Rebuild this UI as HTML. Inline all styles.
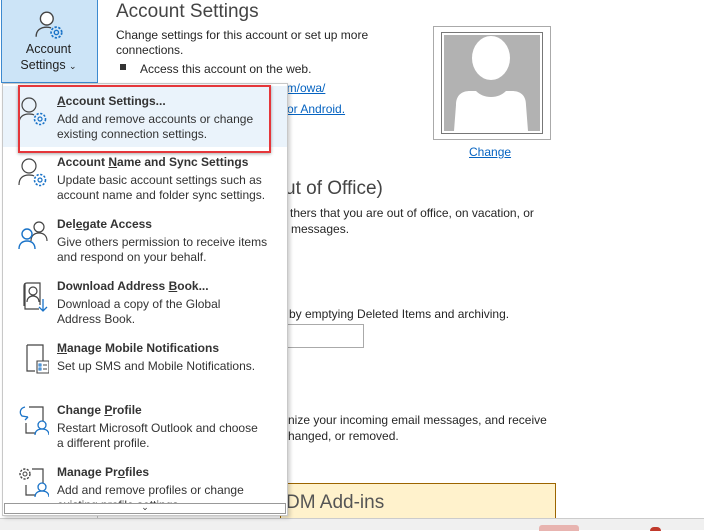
<!DOCTYPE html>
<html><head><meta charset="utf-8"><style>
*{margin:0;padding:0;box-sizing:border-box}
body{width:704px;height:530px;overflow:hidden;background:#fff;font-family:"Liberation Sans",sans-serif;color:#262626;position:relative;font-size:12px}
.a{position:absolute;white-space:nowrap}
.t{font-size:12px;line-height:15px}
.link{color:#0563c1;text-decoration:underline}
.menu{position:absolute;left:2px;top:83px;width:286px;height:433px;background:#fff;border:1px solid #c8c8c8;box-shadow:2px 2px 4px rgba(0,0,0,.2);overflow:hidden}
.it{position:absolute;left:0;width:284px;height:62px}
.it .h{position:absolute;left:54px;top:10px;font-weight:bold;font-size:12px;color:#333}
.it .d{position:absolute;left:54px;top:27px;font-size:12px;line-height:15px;color:#333;white-space:nowrap}
.it svg{position:absolute;left:14px;top:10px}
</style></head><body>
<div class="a" style="left:1px;top:0;width:97px;height:83px;background:#cce4f7;border:1px solid #3c8ad0;border-top:none"></div>
<svg class="a" style="left:34px;top:9px" width="32" height="32" viewBox="0 0 30 30"><circle cx="12" cy="9" r="6" fill="#fff" stroke="#444" stroke-width="1.3"/><path d="M2 26c0-6 4-9 10-9 2 0 3 .3 4 .7" fill="none" stroke="#444" stroke-width="1.3"/><circle cx="21" cy="22" r="5" fill="none" stroke="#1a73c8" stroke-width="1.6" stroke-dasharray="2.2 1.4"/><circle cx="21" cy="22" r="2" fill="none" stroke="#1a73c8" stroke-width="1.3"/></svg>
<div class="a" style="left:0;width:97px;top:41px;text-align:center;font-size:12.5px;line-height:16px;color:#222">Account<br>Settings <span style="font-size:9px">&#8964;</span></div>
<div class="a" style="left:97px;top:83px;width:1px;height:435px;background:#c8c8c8"></div>

<div class="a" style="left:116px;top:1px;font-size:19px;color:#444">Account Settings</div>
<div class="a t" style="left:116px;top:28px">Change settings for this account or set up more<br>connections.</div>
<div class="a" style="left:120px;top:64px;width:6px;height:6px;background:#333"></div>
<div class="a t" style="left:140px;top:62px">Access this account on the web.</div>
<div class="a t link" style="left:280px;top:81px">om/owa/</div>
<div class="a t link" style="left:287px;top:102px">or Android.</div>
<div class="a" style="left:433px;top:26px;width:118px;height:114px;border:1px solid #aaa;background:#fff"></div>
<div class="a" style="left:441px;top:32px;width:102px;height:102px;border:1px solid #777;background:#fff"></div>
<svg class="a" style="left:444px;top:35px" width="96" height="96" viewBox="0 0 96 96"><rect width="96" height="96" fill="#b2b2b2"/><ellipse cx="47" cy="23" rx="19" ry="22" fill="#fff"/><path d="M10 96 12 70c0-10 6-14 14-14h6c4 4 9 6 15 6s11-2 15-6h6c8 0 14 4 14 14l2 26z" fill="#fff"/></svg>
<div class="a t link" style="left:469px;top:145px">Change</div>
<div class="a" style="left:285px;top:178px;font-size:19px;color:#444">ut of Office)</div>
<div class="a t" style="left:290px;top:206px">thers that you are out of office, on vacation, or</div>
<div class="a t" style="left:291px;top:222px">messages.</div>
<div class="a t" style="left:289px;top:307px">by emptying Deleted Items and archiving.</div>
<div class="a" style="left:280px;top:324px;width:84px;height:24px;border:1px solid #aaa"></div>
<div class="a t" style="left:288px;top:413px">nize your incoming email messages, and receive</div>
<div class="a t" style="left:288px;top:429px">hanged, or removed.</div>
<div class="a" style="left:280px;top:483px;width:276px;height:36px;background:#fff2cc;border:1px solid #9c6500;border-bottom:none"></div>
<div class="a" style="left:286px;top:492px;font-size:19px;color:#555">DM Add-ins</div>
<div class="a" style="left:0;top:518px;width:704px;height:12px;background:#f0f0f0;border-top:1px solid #ccc"></div>
<div class="a" style="left:539px;top:525px;width:40px;height:6px;background:#e8b4b0;border-radius:3px 3px 0 0"></div>
<div class="a" style="left:650px;top:527px;width:11px;height:4px;background:#c0392b;border-radius:5px 5px 0 0"></div>

<div class="menu">
 <div class="it" style="top:2px;height:61px;background:#eaf3fb">
  <svg width="32" height="32" viewBox="0 0 32 32"><circle cx="12" cy="9" r="7" fill="none" stroke="#444" stroke-width="1.2"/><path d="M2 28c0-7 4-10 10-10 2 0 4 .3 5 1" fill="none" stroke="#444" stroke-width="1.2"/><circle cx="23" cy="23" r="5.5" fill="none" stroke="#1a73c8" stroke-width="1.6" stroke-dasharray="2.2 1.5"/><circle cx="23" cy="23" r="2" fill="none" stroke="#1a73c8" stroke-width="1.2"/></svg>
  <div class="h" style="top:8px"><u>A</u>ccount Settings...</div>
  <div class="d" style="top:26px">Add and remove accounts or change<br>existing connection settings.</div>
 </div>
 <div class="it" style="top:63px">
  <svg width="32" height="32" viewBox="0 0 32 32"><circle cx="12" cy="9" r="7" fill="none" stroke="#444" stroke-width="1.2"/><path d="M2 28c0-7 4-10 10-10 2 0 4 .3 5 1" fill="none" stroke="#444" stroke-width="1.2"/><circle cx="23" cy="23" r="5.5" fill="none" stroke="#1a73c8" stroke-width="1.6" stroke-dasharray="2.2 1.5"/><circle cx="23" cy="23" r="2" fill="none" stroke="#1a73c8" stroke-width="1.2"/></svg>
  <div class="h" style="top:8px">Account <u>N</u>ame and Sync Settings</div>
  <div class="d" style="top:26px">Update basic account settings such as<br>account name and folder sync settings.</div>
 </div>
 <div class="it" style="top:125px">
  <svg width="32" height="32" viewBox="0 0 32 32"><circle cx="22" cy="8" r="5" fill="none" stroke="#444" stroke-width="1.2"/><path d="M14 22c0-5 3-8 8-8s8 3 8 8" fill="none" stroke="#444" stroke-width="1.2"/><circle cx="10" cy="15" r="5" fill="none" stroke="#1a73c8" stroke-width="1.4"/><path d="M2 30c0-5 3-8 8-8s8 3 8 8" fill="none" stroke="#1a73c8" stroke-width="1.4"/></svg>
  <div class="h" style="top:8px">Del<u>e</u>gate Access</div>
  <div class="d" style="top:26px">Give others permission to receive items<br>and respond on your behalf.</div>
 </div>
 <div class="it" style="top:187px">
  <svg width="32" height="32" viewBox="0 0 32 32"><path d="M10 2h13v22M8 2v26h14" fill="none" stroke="#444" stroke-width="1.2"/><path d="M10 2c-2 0-3 1-3 3v20" fill="none" stroke="#444" stroke-width="1.2"/><circle cx="16" cy="10" r="4" fill="none" stroke="#444" stroke-width="1.2"/><path d="M10 21c0-4 3-6 6-6s6 2 6 6" fill="none" stroke="#444" stroke-width="1.2"/><path d="M26 18v12M22 26l4 4 4-4" fill="none" stroke="#1a73c8" stroke-width="1.3"/></svg>
  <div class="h" style="top:8px">Download Address <u>B</u>ook...</div>
  <div class="d" style="top:26px">Download a copy of the Global<br>Address Book.</div>
 </div>
 <div class="it" style="top:249px">
  <svg width="32" height="32" viewBox="0 0 32 32"><path d="M10 2h16v16M10 2v26h8" fill="none" stroke="#444" stroke-width="1.2"/><path d="M20 18h12v12H20z" fill="#fff" stroke="#444" stroke-width="1.1"/><path d="M22 21h2v2h-2zM22 25h2v2h-2z" fill="none" stroke="#1a73c8" stroke-width="1"/><path d="M26 22h4M26 26h4" stroke="#444" stroke-width="1"/></svg>
  <div class="h" style="top:8px"><u>M</u>anage Mobile Notifications</div>
  <div class="d" style="top:26px">Set up SMS and Mobile Notifications.</div>
 </div>
 <div class="it" style="top:311px">
  <svg width="32" height="32" viewBox="0 0 32 32"><path d="M12 2h14v14M9 18v10h10" fill="none" stroke="#444" stroke-width="1.2"/><path d="M8 2C3 3 2 8 5 11l6 1M11 12l-3 3" fill="none" stroke="#1a73c8" stroke-width="1.3"/><circle cx="25" cy="20" r="4" fill="none" stroke="#1a73c8" stroke-width="1.3"/><path d="M18 30c0-4 3-6 7-6s7 2 7 6" fill="none" stroke="#1a73c8" stroke-width="1.3"/></svg>
  <div class="h" style="top:8px">Change <u>P</u>rofile</div>
  <div class="d" style="top:26px">Restart Microsoft Outlook and choose<br>a different profile.</div>
 </div>
 <div class="it" style="top:373px">
  <svg width="32" height="32" viewBox="0 0 32 32"><circle cx="8" cy="7" r="5" fill="none" stroke="#444" stroke-width="1.4" stroke-dasharray="2.2 1.4"/><circle cx="8" cy="7" r="2" fill="none" stroke="#444" stroke-width="1"/><path d="M15 2h11v14M9 18v10h10" fill="none" stroke="#444" stroke-width="1.2"/><circle cx="25" cy="20" r="4" fill="none" stroke="#1a73c8" stroke-width="1.3"/><path d="M18 30c0-4 3-6 7-6s7 2 7 6" fill="none" stroke="#1a73c8" stroke-width="1.3"/></svg>
  <div class="h" style="top:8px">Manage Pr<u>o</u>files</div>
  <div class="d" style="top:26px">Add and remove profiles or change<br>existing profile settings.</div>
 </div>
 <div class="a" style="left:1px;top:419px;width:282px;height:11px;background:#fff;border:1px solid #999;text-align:center;font-size:9px;line-height:6px;color:#333">&#8964;</div>
</div>
<div class="a" style="left:18px;top:85px;width:253px;height:68px;border:2px solid #e5363a;box-shadow:0 1px 3px rgba(0,0,0,.35)"></div>
</body></html>
